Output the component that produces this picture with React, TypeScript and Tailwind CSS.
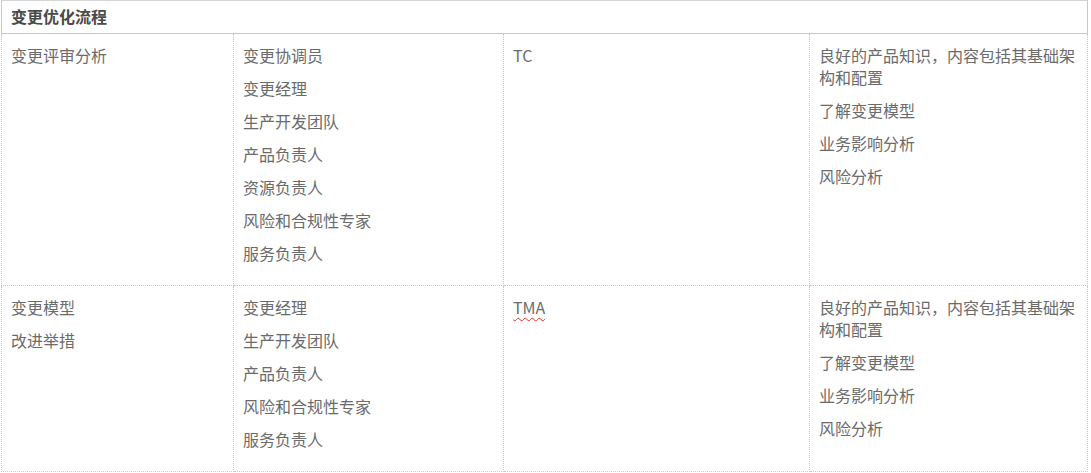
const rows = [
  {
    stage: ["变更评审分析"],
    roles: ["变更协调员", "变更经理", "生产开发团队", "产品负责人", "资源负责人", "风险和合规性专家", "服务负责人"],
    owner: "TC",
    skills: ["良好的产品知识，内容包括其基础架构和配置", "了解变更模型", "业务影响分析", "风险分析"],
  },
  {
    stage: ["变更模型", "改进举措"],
    roles: ["变更经理", "生产开发团队", "产品负责人", "风险和合规性专家", "服务负责人"],
    owner: "TMA",
    skills: ["良好的产品知识，内容包括其基础架构和配置", "了解变更模型", "业务影响分析", "风险分析"],
  },
]

function Items({ list }: { list: string[] }) {
  return (
    <>
      {list.map((t) => (
        <p key={t} className="mb-[11px]">{t}</p>
      ))}
    </>
  )
}

export default function App() {
  const cell = "border border-dotted border-[#c8c8c8] align-top pl-[9px] pr-[8px] pt-[10px] pb-[10px]"

  return (
    <div className="bg-white w-[1091px] h-[473px] pl-[1px] font-['Noto_Sans_CJK_SC','Noto_Sans',sans-serif] text-[16px] leading-[22px] text-[#6b6b6b]">
      <table className="table-fixed border-collapse w-[1086px]">
        <colgroup>
          <col className="w-[232px]" />
          <col className="w-[270px]" />
          <col className="w-[306px]" />
          <col className="w-[278px]" />
        </colgroup>
        <thead>
          <tr>
            <th
              colSpan={4}
              className="border-t border-solid border-t-[#d4d4d4] border-x border-x-[#c8c8c8] border-x-dotted border-b border-b-dotted border-b-[#c8c8c8] text-left font-bold text-[#4a4a4a] pl-[9px] pt-[4px] pb-[6px]"
            >
              变更优化流程
            </th>
          </tr>
        </thead>
        <tbody>
          {rows.map((r, i) => (
            <tr key={i}>
              <td className={cell}>
                <Items list={r.stage} />
              </td>
              <td className={cell} style={i === 0 ? { borderTopStyle: "solid", borderTopColor: "#d4d4d4" } : undefined}>
                <Items list={r.roles} />
              </td>
              <td className={cell} style={i === 0 ? { borderTopStyle: "solid", borderTopColor: "#d4d4d4" } : undefined}>
                {r.owner === "TMA" ? (
                  <p className="mb-[11px]">
                    <span className="underline decoration-wavy decoration-[#e03030] decoration-1 underline-offset-[3px]">TMA</span>
                  </p>
                ) : (
                  <p className="mb-[11px]">{r.owner}</p>
                )}
              </td>
              <td className={cell}>
                <Items list={r.skills} />
              </td>
            </tr>
          ))}
        </tbody>
      </table>
    </div>
  )
}
